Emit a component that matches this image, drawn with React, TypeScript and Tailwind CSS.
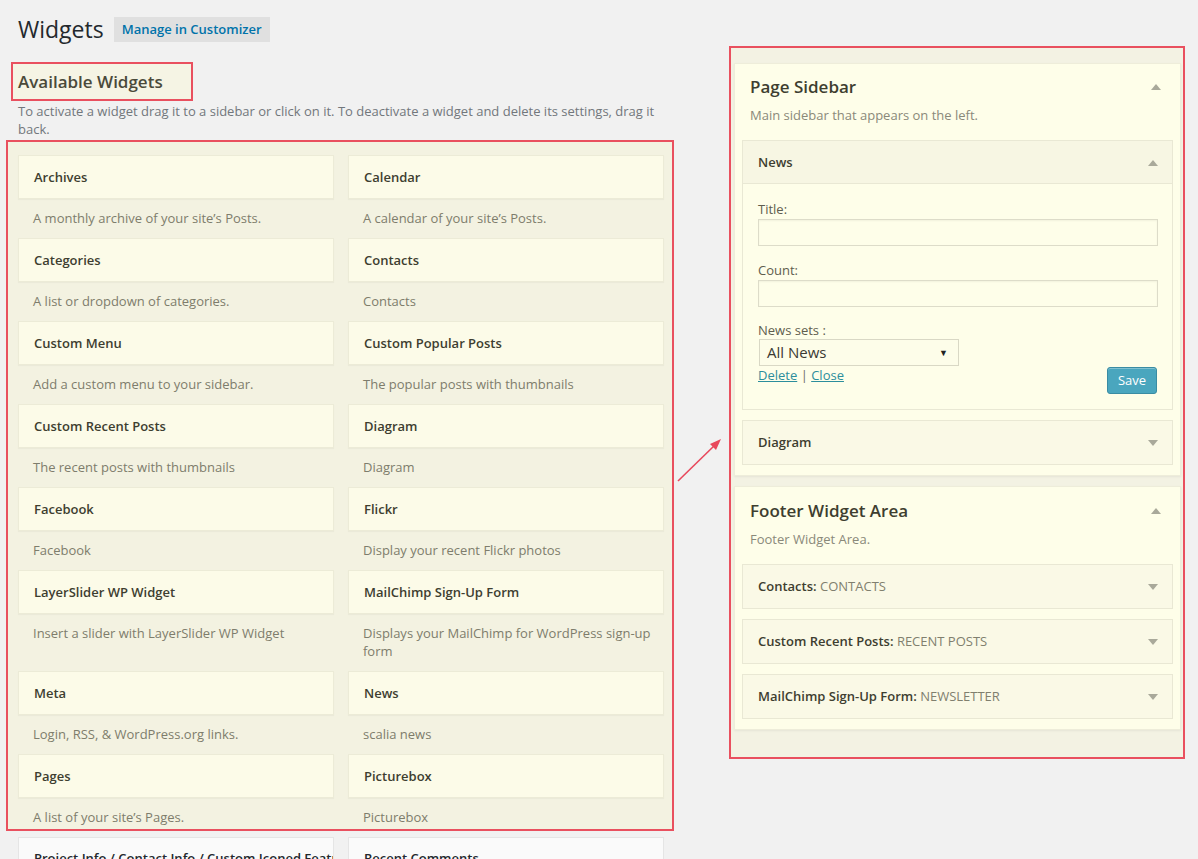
import React from "react";

const widgets: [string, string][] = [
  ["Archives", "A monthly archive of your site’s Posts."],
  ["Calendar", "A calendar of your site’s Posts."],
  ["Categories", "A list or dropdown of categories."],
  ["Contacts", "Contacts"],
  ["Custom Menu", "Add a custom menu to your sidebar."],
  ["Custom Popular Posts", "The popular posts with thumbnails"],
  ["Custom Recent Posts", "The recent posts with thumbnails"],
  ["Diagram", "Diagram"],
  ["Facebook", "Facebook"],
  ["Flickr", "Display your recent Flickr photos"],
  ["LayerSlider WP Widget", "Insert a slider with LayerSlider WP Widget"],
  ["MailChimp Sign-Up Form", "Displays your MailChimp for WordPress sign-up form"],
  ["Meta", "Login, RSS, & WordPress.org links."],
  ["News", "scalia news"],
  ["Pages", "A list of your site’s Pages."],
  ["Picturebox", "Picturebox"],
];

function Caret({ up }: { up?: boolean }) {
  return (
    <svg width="10" height="6" viewBox="0 0 10 6" className="shrink-0">
      {up ? <polygon points="0,6 10,6 5,0" fill="#a9a99a" /> : <polygon points="0,0 10,0 5,6" fill="#a9a99a" />}
    </svg>
  );
}

function WidgetItem({ title, desc, last }: { title: string; desc: string; last?: boolean }) {
  return (
    <div>
      <div className="h-[44px] flex items-center px-[15px] pt-[1px] bg-[#fcfbe8] border border-[#ecebd7] shadow-[0_1px_1px_rgba(0,0,0,0.03)]">
        <h3 className="text-[13px] font-semibold text-[#3e3e30]">{title}</h3>
      </div>
      <p className={`pl-[15px] pr-[6px] pt-[10px] text-[13px] leading-[18px] text-[#7e7d6c] ${last ? "pb-[3px]" : "pb-[11px]"}`}>
        {desc}
      </p>
    </div>
  );
}

function SidebarWidget({ name, label }: { name: string; label?: string }) {
  return (
    <div className="h-[45px] flex items-center justify-between pl-[15px] pr-[14px] bg-[#faf9e6] border border-[#e9e8d4]">
      <span className="text-[13px] font-semibold text-[#3e3e30]">
        {name}
        {label && <span className="font-normal text-[#807f6e]"> {label}</span>}
      </span>
      <Caret />
    </div>
  );
}

export default function App() {
  return (
    <div className="relative h-screen w-full overflow-hidden bg-[#f1f1f1] font-['Open_Sans',sans-serif]">
      {/* heading */}
      <div className="flex items-center gap-[10px] pl-[18px] pt-[15px]">
        <h1 className="text-[23px] leading-[29px] font-normal text-[#23282d]">Widgets</h1>
        <span className="h-[25px] flex items-center px-[8px] bg-[#e0e0e0] text-[13px] font-semibold text-[#0073aa]">
          Manage in Customizer
        </span>
      </div>

      <div className="flex items-start mt-[2px]">
        {/* Available widgets */}
        <div className="ml-[6px] w-[668px] shrink-0">
          <div className="mt-[16px] ml-[5px] w-[182px] h-[39px] flex items-center pl-[5px] pt-[1px] border-2 border-[#e9505f] bg-[#f5f4e4]">
            <h2 className="text-[17px] font-semibold text-[#4a4a3a]">Available Widgets</h2>
          </div>
          <p className="ml-[12px] mt-[1px] text-[13px] leading-[18px] text-[#72777c]">
            To activate a widget drag it to a sidebar or click on it. To deactivate a widget and delete its settings, drag it
            <br />
            back.
          </p>
          <div className="mt-[2px] border-2 border-[#e9505f] bg-[#f3f2e1] pl-[10px] pr-[8px] pt-[13px]">
            <div className="grid grid-cols-2 gap-x-[14px]">
              {widgets.map(([t, d], i) => (
                <WidgetItem key={t} title={t} desc={d} last={i >= widgets.length - 2} />
              ))}
            </div>
          </div>
          <div className="mt-[6px] ml-[12px] mr-[10px] grid grid-cols-2 gap-x-[14px]">
            {["Project Info / Contact Info / Custom Iconed Features", "Recent Comments"].map((t) => (
              <div key={t} className="h-[44px] flex items-center px-[15px] bg-[#fafafa] border border-[#e5e5e5] overflow-hidden">
                <h3 className="text-[13px] font-semibold text-[#23282d] whitespace-nowrap">{t}</h3>
              </div>
            ))}
          </div>
        </div>

        {/* Sidebars */}
        <div className="ml-[55px] w-[456px] shrink-0 border-2 border-[#e9505f] bg-[#f3f2e3] pl-[3px] pr-[2px] pt-[15px] pb-[27px]">
          <div className="bg-[#fefee9] border border-[#eeedda] shadow-[0_1px_2px_rgba(0,0,0,0.06)] pt-[11px] pb-[10px] px-[7px]">
            <div className="flex items-center justify-between pl-[8px] pr-[12px]">
              <h2 className="text-[17px] leading-[24px] font-semibold text-[#3e3e30]">Page Sidebar</h2>
              <Caret up />
            </div>
            <p className="pl-[8px] mt-[7px] text-[13px] leading-[18px] text-[#8a897a]">Main sidebar that appears on the left.</p>
            <div className="mt-[16px] border border-[#e9e8d4]">
              <div className="h-[43px] flex items-center justify-between pl-[15px] pr-[14px] pt-[1px] bg-[#f7f6e3] border-b border-[#e9e8d4]">
                <span className="text-[13px] font-semibold text-[#3e3e30]">News</span>
                <Caret up />
              </div>
              <div className="bg-[#fefee9] px-[15px] pt-[16px] pb-[15px]">
                <label className="block text-[13px] leading-[18px] text-[#5e5d4e]">Title:</label>
                <input className="mt-[1px] block w-[400px] h-[27px] bg-[#fefee9] border border-[#dddcc9] shadow-[inset_0_1px_2px_rgba(0,0,0,0.05)]" />
                <label className="block mt-[15px] text-[13px] leading-[18px] text-[#5e5d4e]">Count:</label>
                <input className="mt-[1px] block w-[400px] h-[27px] bg-[#fefee9] border border-[#dddcc9] shadow-[inset_0_1px_2px_rgba(0,0,0,0.05)]" />
                <label className="block mt-[14px] text-[13px] leading-[18px] text-[#5e5d4e]">News sets :</label>
                <div className="ml-[1px] w-[200px] h-[27px] flex items-center justify-between pl-[7px] pr-[10px] bg-[#fdfde9] border border-[#d9d8c5]">
                  <span className="text-[15px] text-[#3a3a33]">All News</span>
                  <span className="text-[9px] text-[#222]">▼</span>
                </div>
                <div className="flex items-start justify-between">
                  <div className="text-[13px] leading-[18px] text-[#6f6f62]">
                    <span className="underline text-[#2c8e9c]">Delete</span> | <span className="underline text-[#2c8e9c]">Close</span>
                  </div>
                  <button className="mt-[1px] w-[50px] h-[27px] rounded-[3px] bg-[#4aa6be] border border-[#3a8ca3] text-[13px] text-white shadow-[inset_0_1px_0_rgba(255,255,255,0.3)]">
                    Save
                  </button>
                </div>
              </div>
            </div>
            <div className="mt-[10px]">
              <SidebarWidget name="Diagram" />
            </div>
          </div>

          <div className="mt-[10px] bg-[#fefee9] border border-[#eeedda] shadow-[0_1px_2px_rgba(0,0,0,0.06)] pt-[12px] pb-[10px] px-[7px]">
            <div className="flex items-center justify-between pl-[8px] pr-[12px]">
              <h2 className="text-[17px] leading-[24px] font-semibold text-[#3e3e30]">Footer Widget Area</h2>
              <Caret up />
            </div>
            <p className="pl-[8px] mt-[7px] text-[13px] leading-[18px] text-[#8a897a]">Footer Widget Area.</p>
            <div className="mt-[16px] flex flex-col gap-[10px]">
              <SidebarWidget name="Contacts:" label="CONTACTS" />
              <SidebarWidget name="Custom Recent Posts:" label="RECENT POSTS" />
              <SidebarWidget name="MailChimp Sign-Up Form:" label="NEWSLETTER" />
            </div>
          </div>
        </div>
      </div>

      {/* annotation arrow */}
      <svg className="absolute left-[672px] top-[432px]" width="56" height="56" viewBox="0 0 56 56">
        <line x1="6" y1="49" x2="44" y2="12" stroke="#e8485c" strokeWidth="1.6" />
        <polygon points="49,7 38,12 44,18" fill="#e8485c" />
      </svg>
    </div>
  );
}
